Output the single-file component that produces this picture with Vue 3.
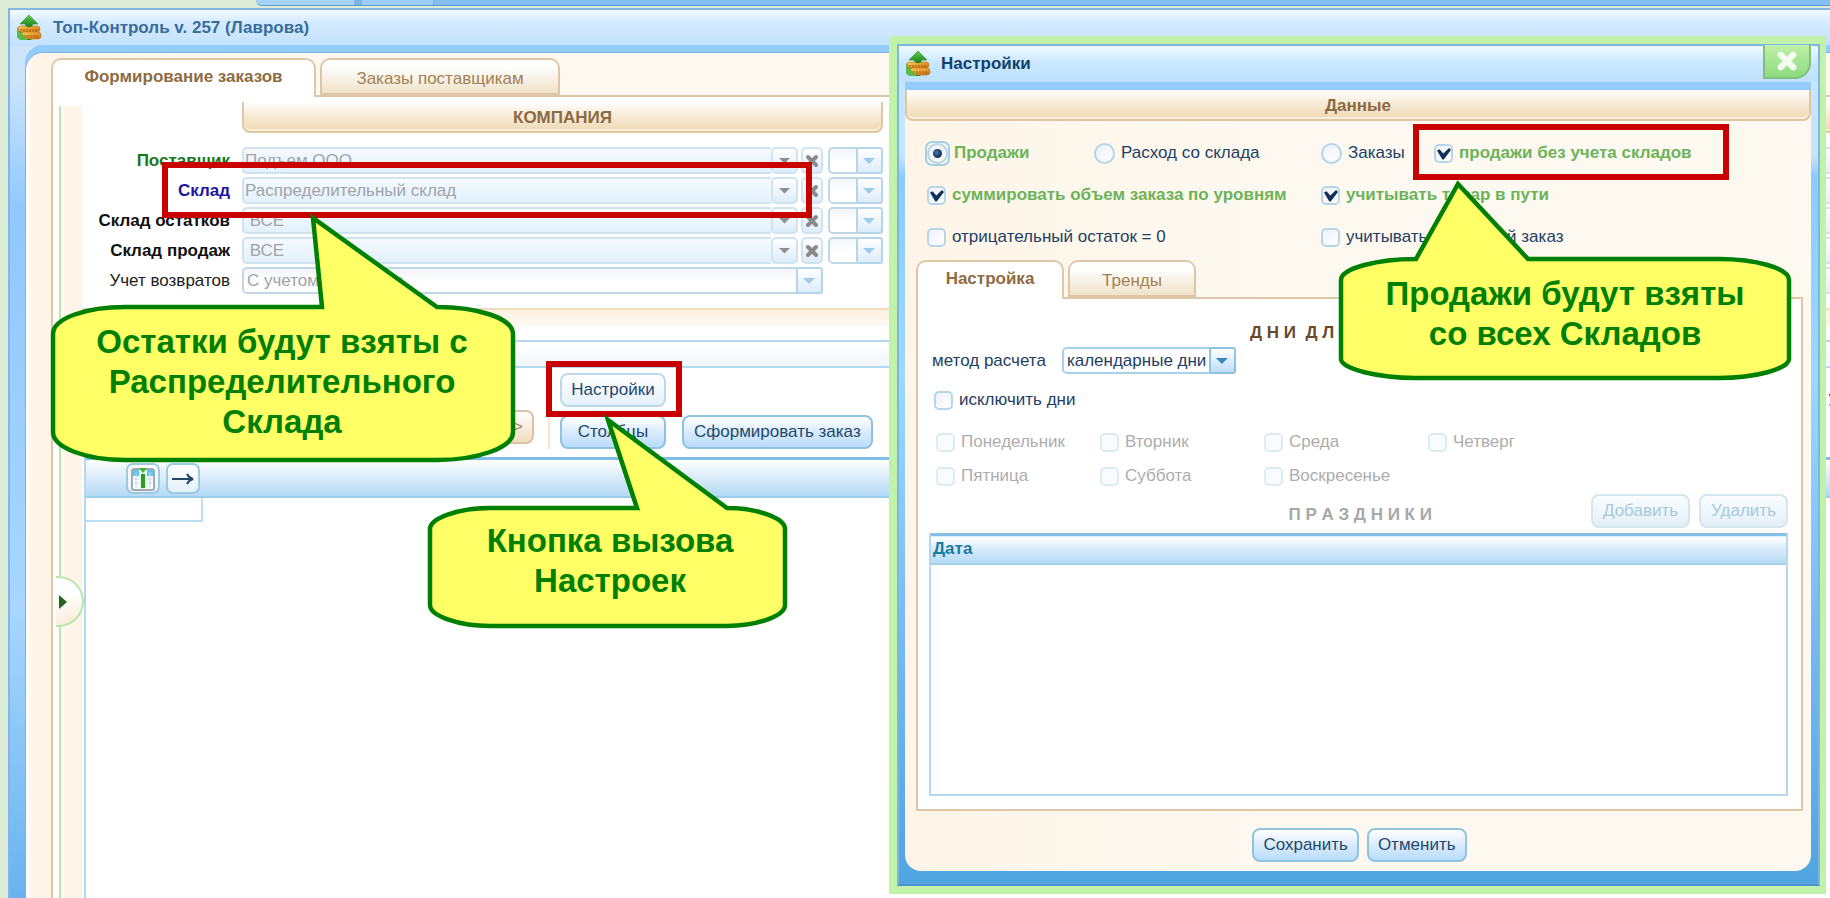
<script setup>
import { ref } from 'vue'

const rows = [
  { id: 'supplier', label: 'Поставщик', value: 'Подъем ООО', tone: 'green' },
  { id: 'store', label: 'Склад', value: 'Распределительный склад', tone: 'blue' },
  { id: 'rest', label: 'Склад остатков', value: ' ВСЕ', tone: 'dark' },
  { id: 'sales', label: 'Склад продаж', value: ' ВСЕ', tone: 'dark' },
]
const days = ['Понедельник', 'Вторник', 'Среда', 'Четверг', 'Пятница', 'Суббота', 'Воскресенье']
const daysTitle = 'Д Н И  Д Л Я'
const source = ref('sales')
const noStores = ref(true)
const sumLevels = ref(true)
const inTransit = ref(true)
const negative = ref(false)
const lastOrder = ref(false)
const exclude = ref(false)
</script>

<template>
  <div class="desk">
    <svg class="defs" width="0" height="0" aria-hidden="true">
      <defs>
        <linearGradient id="leaf" x1="0" y1="0" x2="0" y2="1">
          <stop offset="0" stop-color="#5fd04a" />
          <stop offset="1" stop-color="#17801f" />
        </linearGradient>
        <linearGradient id="coin" x1="0" y1="0" x2="1" y2="1">
          <stop offset="0" stop-color="#ffd060" />
          <stop offset="1" stop-color="#c46a08" />
        </linearGradient>
        <symbol id="logo" viewBox="0 0 26 26">
          <path d="M1 12 L1 21 Q2 25 8 25 L16 25 Z" fill="url(#leaf)" />
          <rect x="2" y="11" width="22" height="6" rx="3" fill="url(#coin)" stroke="#c07818" stroke-width="0.7" />
          <rect x="5" y="17" width="20" height="7" rx="3" fill="url(#coin)" stroke="#c07818" stroke-width="0.7" />
          <path d="M5 14v2M8 14v2M11 14v2M14 14v2M17 14v2M20 14v2M9 20v3M12 20v3M15 20v3M18 20v3M21 20v3" stroke="#a8600c" />
          <path d="M1 16 Q6 17 11 25 L5 25 Q1 24 1 20 Z" fill="#58bb48" />
          <path d="M13 0 L22 9 L17 9 Q16 12 13 12 Q10 12 9 9 L4 9 Z" fill="url(#leaf)" stroke="#2b8a2b" stroke-width="0.6" />
        </symbol>
        <symbol id="cross" viewBox="0 0 14 14">
          <path d="M3 3 L11 11 M11 3 L3 11" stroke="currentColor" stroke-width="4" stroke-linecap="round" />
        </symbol>
      </defs>
    </svg>

    <div class="backtabs"><i></i><i></i></div>

    <main class="window">
      <header class="titlebar">
        <svg class="logo"><use href="#logo" /></svg>
        <h1>Топ-Контроль v. 257 (Лаврова)</h1>
      </header>
      <div class="body">
        <nav class="tabs main-tabs">
          <button class="tab active">Формирование заказов</button>
          <button class="tab">Заказы поставщикам</button>
        </nav>
        <div class="sheet">
          <aside class="rail">
            <button class="expander" aria-label="Развернуть"></button>
          </aside>
          <div class="work">
            <div class="forms">
              <section class="company">
                <h2 class="band">КОМПАНИЯ</h2>
                <form class="fields">
                  <template v-for="r in rows" :key="r.id">
                    <label :for="r.id" :class="r.tone">{{ r.label }}</label>
                    <div class="lookup">
                      <input :id="r.id" type="text" :value="r.value" readonly />
                      <button type="button" class="sq arrow" aria-label="Выбрать"></button>
                      <button type="button" class="sq clear" aria-label="Очистить">
                        <svg><use href="#cross" /></svg>
                      </button>
                    </div>
                    <div class="drop faded"><select :aria-label="r.label"><option></option></select></div>
                  </template>
                  <label for="returns">Учет возвратов</label>
                  <div class="drop faded"><select id="returns"><option>С учетом возвратов</option></select></div>
                </form>
              </section>
              <section class="neighbour">
                <div class="band"></div>
                <i v-for="n in 5" :key="n"></i>
              </section>
            </div>
            <div class="divider"></div>
            <div class="strip"></div>
            <div class="toolbar">
              <button class="btn beige next">&gt;</button>
              <span class="sep"></span>
              <div class="stack">
                <button class="btn pale">Настройки</button>
                <button class="btn">Столбцы</button>
              </div>
              <button class="btn order">Сформировать заказ</button>
              <b class="edge">У</b>
            </div>
            <div class="grid">
              <div class="gridhead">
                <button class="tool" aria-label="Столбцы">
                  <svg width="24" height="24" viewBox="0 0 24 24">
                    <rect x="1" y="2" width="22" height="21" rx="2" fill="#fff" stroke="#a3abb0" stroke-width="2" />
                    <path d="M2 3h6v6H2zM16 3h6v6h-6z" fill="#5cc4f2" />
                    <path d="M5 5v16M19 5v16M3 12h5M3 16h5M16 12h5M16 16h5" stroke="#b9dff2" />
                    <path d="M8 3h8v19H8z" fill="#e9f8e5" />
                    <path d="M10 7h4v14h-4z" fill="#2d9c26" />
                    <path d="M8 1h8l-4 5z" fill="#3cb52f" />
                  </svg>
                </button>
                <button class="tool" aria-label="Вправо">
                  <svg width="24" height="16" viewBox="0 0 24 16" fill="none" stroke="#24486c" stroke-width="2">
                    <path d="M1 8h20M16 3q2 4 6 5q-4 1-6 5" />
                  </svg>
                </button>
              </div>
              <div class="cell"></div>
            </div>
          </div>
        </div>
      </div>
    </main>

    <section class="dialog" role="dialog" aria-labelledby="dlg-title">
      <div class="frame">
        <header class="titlebar">
          <svg class="logo"><use href="#logo" /></svg>
          <h2 id="dlg-title">Настройки</h2>
          <button class="close" aria-label="Закрыть"><svg><use href="#cross" /></svg></button>
        </header>
        <div class="panel">
          <h3 class="band">Данные</h3>
          <div class="options">
            <label class="opt on"><input v-model="source" class="ringed" type="radio" value="sales" />Продажи</label>
            <label class="opt"><input v-model="source" type="radio" value="expense" />Расход со склада</label>
            <label class="opt"><input v-model="source" type="radio" value="orders" />Заказы</label>
            <label class="opt on"><input v-model="noStores" type="checkbox" />продажи без учета складов</label>
            <label class="opt on wide"><input v-model="sumLevels" type="checkbox" />суммировать объем заказа по уровням</label>
            <label class="opt on wide"><input v-model="inTransit" type="checkbox" />учитывать товар в пути</label>
            <label class="opt wide"><input v-model="negative" type="checkbox" />отрицательный остаток = 0</label>
            <label class="opt wide"><input v-model="lastOrder" type="checkbox" />учитывать последний заказ</label>
          </div>
          <nav class="tabs">
            <button class="tab active">Настройка</button>
            <button class="tab">Тренды</button>
          </nav>
          <div class="tabpage">
            <h4 class="caption lead">{{ daysTitle }}</h4>
            <div class="method">
              <label for="method">метод расчета</label>
              <div class="drop"><select id="method"><option>календарные дни</option></select></div>
            </div>
            <label class="opt exclude"><input v-model="exclude" type="checkbox" />исключить дни</label>
            <div class="days">
              <label v-for="d in days" :key="d" class="opt off"><input type="checkbox" disabled />{{ d }}</label>
            </div>
            <div class="holidays">
              <h4 class="caption muted">П Р А З Д Н И К И</h4>
              <button class="btn off" disabled>Добавить</button>
              <button class="btn off" disabled>Удалить</button>
            </div>
            <div class="tablebox">
              <table><thead><tr><th>Дата</th></tr></thead></table>
            </div>
          </div>
          <footer>
            <button class="btn">Сохранить</button>
            <button class="btn">Отменить</button>
          </footer>
        </div>
      </div>
    </section>

    <div class="mark mark-store"></div>
    <div class="mark mark-settings"></div>
    <div class="mark mark-sales"></div>

    <div class="callout c-store">
      <svg width="480" height="260" viewBox="0 0 480 260">
        <path d="M78 97 H275 L266 8 L390 97 C430 97 466 108 466 124 V222 C466 238 430 250 390 250 H78 C40 250 6 238 6 222 V124 C6 108 40 97 78 97 Z" />
      </svg>
      <p>Остатки будут взяты с<br />Распределительного<br />Склада</p>
    </div>
    <div class="callout c-settings">
      <svg width="370" height="230" viewBox="0 0 370 230">
        <path d="M65 98 H212 L183 10 L302 98 C332 98 360 108 360 119 V195 C360 206 332 216 302 216 H65 C34 216 5 206 5 195 V119 C5 108 34 98 65 98 Z" />
      </svg>
      <p>Кнопка вызова<br />Настроек</p>
    </div>
    <div class="callout c-sales">
      <svg width="460" height="210" viewBox="0 0 460 210">
        <path d="M80 84 H81 L123 9 L193 84 H384 C420 84 454 93 454 105 V184 C454 194 420 203 384 203 H80 C44 203 6 194 6 184 V105 C6 93 44 84 80 84 Z" />
      </svg>
      <p>Продажи будут взяты<br />со всех Складов</p>
    </div>
  </div>
</template>

<style>
body { margin: 0; background: #dcecd6; }
</style>

<style scoped>
.desk {
  position: relative;
  display: flex;
  flex-direction: column;
  min-height: 100vh;
  overflow: hidden;
  background: #dcecd6;
  font: 17px/20px "Liberation Sans", Arial, sans-serif;
  color: #1f4064;
}
.desk *, .desk *::before, .desk *::after { box-sizing: border-box; }
.defs { position: absolute; }
h1, h2, h3, h4, p { margin: 0; font-size: 17px; line-height: 20px; }
button, input, select { font: inherit; color: inherit; margin: 0; }
button { padding: 0; cursor: pointer; }

.backtabs {
  display: flex;
  height: 6px;
  margin-left: 256px;
  overflow: hidden;
  background: #83bff0;
  border-bottom: 1px solid #5b9bd0;
  border-bottom-left-radius: 8px;
}
.backtabs i { width: 106px; border-right: 8px solid #7db5e6; background: #a5d2f7; }
.backtabs i + i { width: 72px; border-right-width: 1px; background: #9ccdf8; }

.window {
  flex: 1;
  display: flex;
  flex-direction: column;
  margin: 2px 0 0 8px;
  padding-left: 15px;
  border: 2px solid #84b6e2;
  border-width: 2px 0 0 2px;
  background:
    linear-gradient(180deg, #f2fbff 0, #d5ebff 12px, #c3e2fd 36px) top / 100% 36px no-repeat,
    linear-gradient(180deg, #cfe6fb 0, #cbe4fb 70px, #90c8ff 200px, #a8d6ff 600px, #68b3f0 100%);
}
.titlebar { display: flex; align-items: center; height: 42px; }
.logo { width: 26px; height: 26px; }
.window > .titlebar { margin-left: -9px; padding-bottom: 6px; }
.titlebar h1 { margin-left: 11px; color: #3a6c9c; }
.body {
  flex: 1;
  display: flex;
  flex-direction: column;
  padding: 5px 0 0 25px;
  border-top: 1px solid #7cb4e8;
  border-left: 1px solid #7cb0e6;
  border-top-left-radius: 18px;
  background: linear-gradient(90deg, #fff 0, #fef5e8 6px, #fef6e9 60px, #fdf9f0 400px);
  box-shadow: 0 -7px 0 #92cdfc;
}
.tabs { display: flex; gap: 4px; }
.tab {
  height: 37px;
  border: 2px solid #dfc6a6;
  border-radius: 10px 10px 0 0;
  background: linear-gradient(180deg, #fff 20%, #f0e2c8);
  color: #a18257;
  padding-top: 4px;
}
.tab.active {
  position: relative;
  height: 39px;
  margin-bottom: -2px;
  padding-top: 2px;
  padding-bottom: 5px;
  border-bottom: 0;
  background: #fff;
  color: #8d6c44;
  font-weight: bold;
}
.main-tabs .tab { width: 240px; }
.main-tabs .active { width: 265px; }
.sheet {
  flex: 1;
  display: flex;
  border-top: 2px solid #dfc6a6;
  border-left: 2px solid #dfc6a6;
  background: #fff;
}
.rail {
  position: relative;
  width: 23px;
  margin: 9px 0 0 6px;
  border-left: 2px solid #b8eaa5;
  background: linear-gradient(90deg, #fff 2px, #fef5e8 3px);
}
.expander {
  position: absolute;
  top: 470px;
  left: -5px;
  width: 28px;
  height: 51px;
  border: 2px solid #b8e6ae;
  border-left: 0;
  border-radius: 0 26px 26px 0;
  background: linear-gradient(160deg, #fff 40%, #fbe6d0);
}
.expander::before {
  content: "";
  position: absolute;
  left: 3px;
  top: 17px;
  border: 7px solid transparent;
  border-left: 8px solid #24641c;
  border-right: 0;
}
.work { flex: 1; min-width: 0; display: flex; flex-direction: column; }
.forms { display: flex; gap: 20px; padding-top: 5px; }
.company { flex: 0 0 801px; }
.band {
  height: 31px;
  padding-top: 6px;
  text-align: center;
  color: #8c6a44;
  border: 2px solid #e0c6a2;
  border-top: 0;
  border-radius: 0 0 8px 8px;
  background: linear-gradient(180deg, #fff 0, #f6ead4 50%, #f0d9b4 100%);
  box-shadow: inset 0 -2px 0 #f8eedb;
}
.company .band { margin-left: 160px; }
.fields {
  display: grid;
  grid-template-columns: 148px 588px 55px;
  gap: 3px 5px;
  grid-auto-rows: 27px;
  align-items: center;
  margin-top: 14px;
}
.fields > label { text-align: right; color: #222; }
.fields > .green { color: #17771c; font-weight: bold; }
.fields > .blue { color: #1c16a0; font-weight: bold; }
.fields > .dark { color: #111; font-weight: bold; }
.fields > :nth-child(3n + 2) { margin-left: 7px; }
.lookup { display: flex; height: 27px; }
.lookup input {
  flex: 1;
  min-width: 0;
  padding: 0 1px;
  white-space: pre;
  border: 2px solid #cfe4ee;
  border-right: 0;
  border-radius: 5px 0 0 5px;
  background: linear-gradient(180deg, #f5faff, #e3f1fc);
  color: #a0a4a8;
  outline: 0;
}
.sq {
  width: 27px;
  border: 2px solid #cfe4ee;
  border-radius: 5px;
  background: linear-gradient(180deg, #fff, #dcecfa);
}
.arrow::before {
  content: "";
  display: block;
  width: 12px;
  height: 6px;
  margin: auto;
  background: #8b8f92;
  clip-path: polygon(0 0, 100% 0, 50% 100%);
}
.clear { width: 22px; margin-left: 3px; color: #8a8a8a; display: grid; place-items: center; }
.clear svg { width: 14px; height: 14px; }
.drop { position: relative; display: flex; height: 27px; }
.drop select {
  appearance: none;
  width: 100%;
  padding: 0 27px 0 3px;
  border: 2px solid #a8d2ec;
  border-radius: 5px;
  background: #fff;
  outline: 0;
}
.drop::before {
  content: "";
  position: absolute;
  right: 0;
  top: 0;
  width: 27px;
  height: 27px;
  border: 2px solid #8fc3e4;
  border-radius: 3px;
  background: linear-gradient(180deg, #fff, #bfdefa);
  pointer-events: none;
}
.drop::after {
  content: "";
  position: absolute;
  right: 8px;
  top: 11px;
  width: 12px;
  height: 6px;
  background: #3d86bd;
  clip-path: polygon(0 0, 100% 0, 50% 100%);
  pointer-events: none;
}
.drop.faded select { border-color: #c0d8e5; background: linear-gradient(180deg, #f3f5f9, #fff 60%); color: #a0a4a8; }
.drop.faded::before { border-color: #b5d6ea; background: linear-gradient(180deg, #fff, #dcecfa); }
.drop.faded::after { background: #9fcbe8; }
.neighbour { flex: 1; display: flex; flex-direction: column; gap: 3px; margin-right: -8px; }
.neighbour .band { margin-bottom: 11px; }
.neighbour i { height: 27px; border: 2px solid #cfe4ee; background: linear-gradient(180deg, #fff, #e3f1fc); }
.divider { height: 32px; margin-top: 14px; border-top: 2px solid #f2dcc0; background: linear-gradient(180deg, #fdf1e0, #fef9f2 15px, #fff 18px); }
.strip { height: 28px; border: 2px solid #b4d8ef; border-width: 2px 0; background: linear-gradient(180deg, #fff, #f1f7fd); }
.toolbar { display: flex; align-items: flex-end; height: 89px; padding-bottom: 8px; }
.btn {
  height: 34px;
  padding: 0 9px;
  border: 2px solid #8fc3e0;
  border-radius: 8px;
  background: linear-gradient(180deg, #fff 0, #d9ebfd 50%, #b9dcfb);
  color: #24486c;
}
.btn.pale { border-color: #bcd9ec; background: linear-gradient(180deg, #fff, #e4f1fd); }
.btn.beige { border-color: #dfc0a0; background: linear-gradient(180deg, #fff, #f1dcc0); color: #a08460; }
.btn.off { border-color: #d5e6ec; background: linear-gradient(180deg, #fbfdfe, #e2eff6); color: #a8c9dd; }
.next { width: 40px; margin: 0 14px 5px 412px; text-align: right; }
.sep { width: 2px; height: 32px; margin-right: 10px; background: #fbe3cb; }
.stack { display: grid; gap: 8px; width: 106px; margin-right: 16px; }
.order { padding: 0 10px; }
.edge { margin: 0 -9px 38px auto; }
.grid { flex: 1; border-left: 2px solid #b4d8ef; margin-left: 2px; }
.gridhead {
  display: flex;
  gap: 6px;
  height: 41px;
  padding: 3px 0 0 40px;
  border-top: 3px solid #7dbde8;
  border-bottom: 2px solid #9ccbec;
  background: linear-gradient(180deg, #fff, #d9ebf9 50%, #b4d9f5);
}
.tool {
  display: grid;
  place-items: center;
  width: 34px;
  height: 31px;
  border: 2px solid #9ccbe0;
  border-radius: 7px;
  background: linear-gradient(180deg, #fff, #e3f1fb);
}
.cell { width: 117px; height: 24px; border: 2px solid #bcdcf0; border-width: 0 2px 2px 0; }

.dialog {
  position: absolute;
  left: 889px;
  right: 4px;
  top: 36px;
  bottom: 4px;
  display: flex;
  padding: 8px 6px 8px 8px;
  background: #c0f2aa;
}
.frame {
  flex: 1;
  display: flex;
  flex-direction: column;
  padding: 0 7px 13px 6px;
  border: 2px solid #7fb5e2;
  border-bottom-color: #4a93cc;
  background:
    linear-gradient(180deg, #effaff 0, #c8e6ff 18px, #bfe1fd 36px) top / 100% 36px no-repeat,
    linear-gradient(180deg, #c8e6ff 0, #c5e4ff 110px, #8dcbff 130px, #9cd8ff 330px, #74b9f3 600px, #50a5e0 100%);
}
.frame > .titlebar { height: 36px; }
.frame h2 { margin-left: 10px; color: #14406c; }
.close {
  width: 48px;
  height: 34px;
  margin: -4px 0 0 auto;
  display: grid;
  place-items: center;
  border: 2px solid #7fc07a;
  border-top: 0;
  border-radius: 0 0 16px 0;
  background: linear-gradient(180deg, #bff0a8, #8edb80);
  color: #f4fbf0;
}
.close svg { width: 22px; height: 22px; }
.panel {
  flex: 1;
  display: flex;
  flex-direction: column;
  margin-top: 8px;
  padding: 0 8px 9px 11px;
  border-radius: 0 0 16px 16px;
  background: linear-gradient(90deg, #fef5e8, #fdf9f1 400px);
  box-shadow: 0 -8px 0 #94cdfc;
}
.panel > .band { margin: 0 -8px 0 -11px; }
.options {
  display: grid;
  grid-template-columns: 167px 227px 113px 1fr;
  grid-auto-rows: 42px;
  margin: 11px 0 2px 11px;
}
.opt { display: flex; align-items: center; gap: 6px; white-space: nowrap; }
.opt.on { font-weight: bold; color: #6db35a; }
.opt.off { color: #adadad; }
.wide { grid-column: span 2; }
.opt input {
  appearance: none;
  position: relative;
  flex: none;
  width: 19px;
  height: 19px;
  border: 2px solid #b5d6e8;
  border-radius: 5px;
  background: linear-gradient(135deg, #eef1f8, #fff);
}
.opt input[type="radio"] { width: 21px; height: 21px; border-radius: 50%; }
.opt .ringed { box-shadow: 0 0 0 1px #f0f7fb; }
.opt .ringed::after {
  content: "";
  position: absolute;
  inset: -4px;
  border: 2px solid #a5cee2;
  border-radius: 7px;
}
.opt input[type="radio"]:checked::before {
  content: "";
  position: absolute;
  inset: 4px;
  border-radius: 50%;
  background: radial-gradient(circle at 40% 40%, #4c78a8, #10355f 60%);
}
.opt input[type="checkbox"]:checked::before {
  content: "";
  position: absolute;
  inset: 2px 0 1px 1px;
  background: #10305c;
  clip-path: polygon(0 25%, 18% 15%, 45% 50%, 86% 5%, 100% 20%, 48% 100%, 38% 100%);
}
.opt.off input { border-color: #dcebf2; background: #f9fcfe; }
.panel .tab { width: 128px; }
.panel .tab.active { width: 148px; }
.tabpage {
  flex: 1;
  display: flex;
  flex-direction: column;
  padding: 24px 13px 13px 11px;
  border: 2px solid #dfc6a6;
  background: #fff;
}
.caption { white-space: pre; color: #6b4a2c; }
.caption.lead { padding-left: 321px; }
.caption.muted { color: #a8a8a8; }
.method { display: flex; align-items: center; gap: 16px; margin: 4px 0 0 3px; }
.method .drop { width: 174px; }
.exclude { height: 20px; margin: 16px 0 0 5px; align-self: flex-start; }
.days {
  display: grid;
  grid-template-columns: repeat(4, 164px);
  grid-auto-rows: 34px;
  margin: 15px 0 0 7px;
}
.holidays { display: flex; align-items: center; justify-content: flex-end; gap: 9px; height: 36px; }
.holidays .caption { margin-right: 150px; padding-top: 8px; }
.holidays .btn { padding: 0 10px; }
.tablebox { flex: 1; margin-top: 4px; border: 2px solid #b4d8ee; border-top: 0; }
table { width: 100%; border-collapse: collapse; }
th {
  height: 29px;
  padding: 0 2px;
  line-height: 18px;
  text-align: left;
  color: #1b7c9e;
  border-top: 3px solid #84c0e6;
  border-bottom: 2px solid #a5d0ec;
  background: linear-gradient(180deg, #fff, #d5e9f8 50%, #b5daf5);
}
footer { display: flex; justify-content: center; gap: 8px; margin-top: 17px; }

.mark { position: absolute; border: 6px solid #c80000; pointer-events: none; }
.mark-store { left: 162px; top: 162px; width: 650px; height: 56px; }
.mark-settings { left: 546px; top: 361px; width: 136px; height: 56px; }
.mark-sales { left: 1413px; top: 124px; width: 316px; height: 56px; }
.callout { position: absolute; color: #008000; }
.callout svg { display: block; fill: #ffff66; stroke: #008000; stroke-width: 4.5; }
.callout p {
  position: absolute;
  left: 0;
  width: 100%;
  text-align: center;
  font: bold 33px/40px "Liberation Sans", Arial, sans-serif;
}
.c-store { left: 47px; top: 210px; }
.c-store p { top: 112px; left: -5px; }
.c-settings { left: 425px; top: 410px; }
.c-settings p { top: 111px; }
.c-sales { left: 1335px; top: 175px; }
.c-sales p { top: 99px; }
</style>
